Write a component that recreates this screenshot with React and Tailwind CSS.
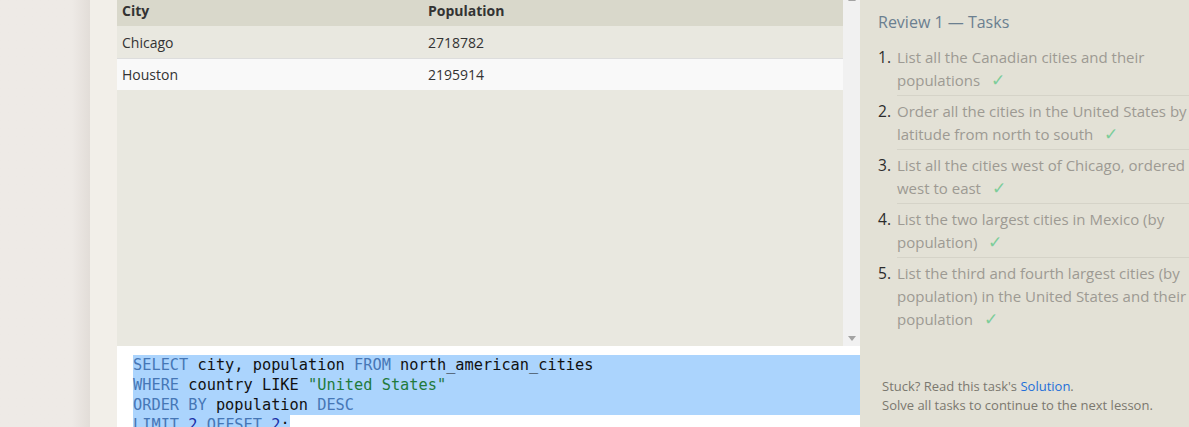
const rows = [
  { city: 'Chicago', population: '2718782' },
  { city: 'Houston', population: '2195914' },
]

const tasks = [
  { n: 1, lines: ['List all the Canadian cities and their', 'populations'] },
  { n: 2, lines: ['Order all the cities in the United States by', 'latitude from north to south'] },
  { n: 3, lines: ['List all the cities west of Chicago, ordered', 'west to east'] },
  { n: 4, lines: ['List the two largest cities in Mexico (by', 'population)'] },
  { n: 5, lines: ['List the third and fourth largest cities (by', 'population) in the United States and their', 'population'] },
]

const kw = 'text-[#4677b6]'

function ResultsTable() {
  return (
    <div className="flex h-[352px] shrink-0 bg-[#e9e8e0]">
      <div className="flex-1 text-[14px] text-[#333]">
        <div className="flex h-[32px] items-center bg-[#d9d8cb] font-bold">
          <div className="w-[306px] pl-[5px]">City</div>
          <div className="pl-[5px]">Population</div>
        </div>
        {rows.map((r, i) => (
          <div
            key={r.city}
            className={`flex h-[32px] items-center ${i === 1 ? 'border-t border-[#dddddd] bg-[#f9f9f9]' : 'bg-[#e9e8e0]'}`}
          >
            <div className="w-[306px] pl-[5px]">{r.city}</div>
            <div className="pl-[5px]">{r.population}</div>
          </div>
        ))}
      </div>
      <div className="flex w-[17px] flex-col items-center justify-between bg-[#f1f1f1] pt-[2px] pb-[5px]">
        <svg width="8" height="5" viewBox="0 0 8 5"><path d="M0 5 L4 0 L8 5 Z" fill="#a3a3a3" /></svg>
        <svg width="8" height="5" viewBox="0 0 8 5"><path d="M0 0 L8 0 L4 5 Z" fill="#a3a3a3" /></svg>
      </div>
    </div>
  )
}

function Editor() {
  return (
    <div className="min-h-0 flex-1 overflow-hidden bg-white pt-[8px] pl-[16px] font-['DejaVu_Sans_Mono',monospace] text-[15.3px] leading-[20px] text-[#111] whitespace-pre">
      <div className="bg-[#abd4fd]">
        <span className={kw}>SELECT</span> city, population <span className={kw}>FROM</span> north_american_cities
      </div>
      <div className="bg-[#abd4fd]">
        <span className={kw}>WHERE</span> country LIKE <span className="text-[#227a3c]">"United States"</span>
      </div>
      <div className="bg-[#abd4fd]">
        <span className={kw}>ORDER BY</span> population <span className={kw}>DESC</span>
      </div>
      <div className="w-fit bg-[#abd4fd]">
        <span className={kw}>LIMIT</span> <span className="text-[#1e30a8]">2</span> <span className={kw}>OFFSET</span> <span className="text-[#1e30a8]">2</span>;
      </div>
    </div>
  )
}

function TaskPanel() {
  return (
    <div className="flex w-[329px] flex-col overflow-hidden bg-[#e3e1d6] pl-[18px] font-['Open_Sans',sans-serif]">
      <h2 className="mt-[17px] text-[16px] leading-[22px] text-[#6b7f90]">Review 1 — Tasks</h2>
      <ol className="mt-[9px] text-[15px] leading-[23px]">
        {tasks.map((t, i) => (
          <li key={t.n} className="flex pt-[4px]">
            <span className="w-[19px] shrink-0 text-[15.5px] text-[#2b2b2b]">{t.n}.</span>
            <div
              className={`flex-1 whitespace-nowrap pb-[3px] text-[#9d9a93] ${i < tasks.length - 1 ? 'border-b border-[#d5d3c8]' : ''}`}
            >
              {t.lines.map((line, j) => (
                <div key={j} className="h-[23px]">
                  {line}
                  {j === t.lines.length - 1 && (
                    <span className="ml-[11px] text-[17px] leading-none text-[#7dcd9a]">✓</span>
                  )}
                </div>
              ))}
            </div>
          </li>
        ))}
      </ol>
      <div className="mt-auto mb-[12px] pl-[4px] text-[13px] leading-[19px] text-[#7b786f]">
        <p>
          Stuck? Read this task's <a className="text-[#1e6fd9]">Solution</a>.
        </p>
        <p>Solve all tasks to continue to the next lesson.</p>
      </div>
    </div>
  )
}

export default function App() {
  return (
    <div className="h-[427px] w-[1189px] overflow-hidden font-['Open_Sans',sans-serif]">
      <div className="-mt-[6px] flex h-[433px]">
        <div className="w-[90px] bg-linear-to-r from-[#eeeae6] from-80% to-[#e2ddd8]" />
        <div className="w-[27px] bg-[#f2efe9]" />
        <div className="flex w-[743px] flex-col">
          <ResultsTable />
          <div className="h-[1px] shrink-0 bg-white" />
          <Editor />
        </div>
        <TaskPanel />
      </div>
    </div>
  )
}
